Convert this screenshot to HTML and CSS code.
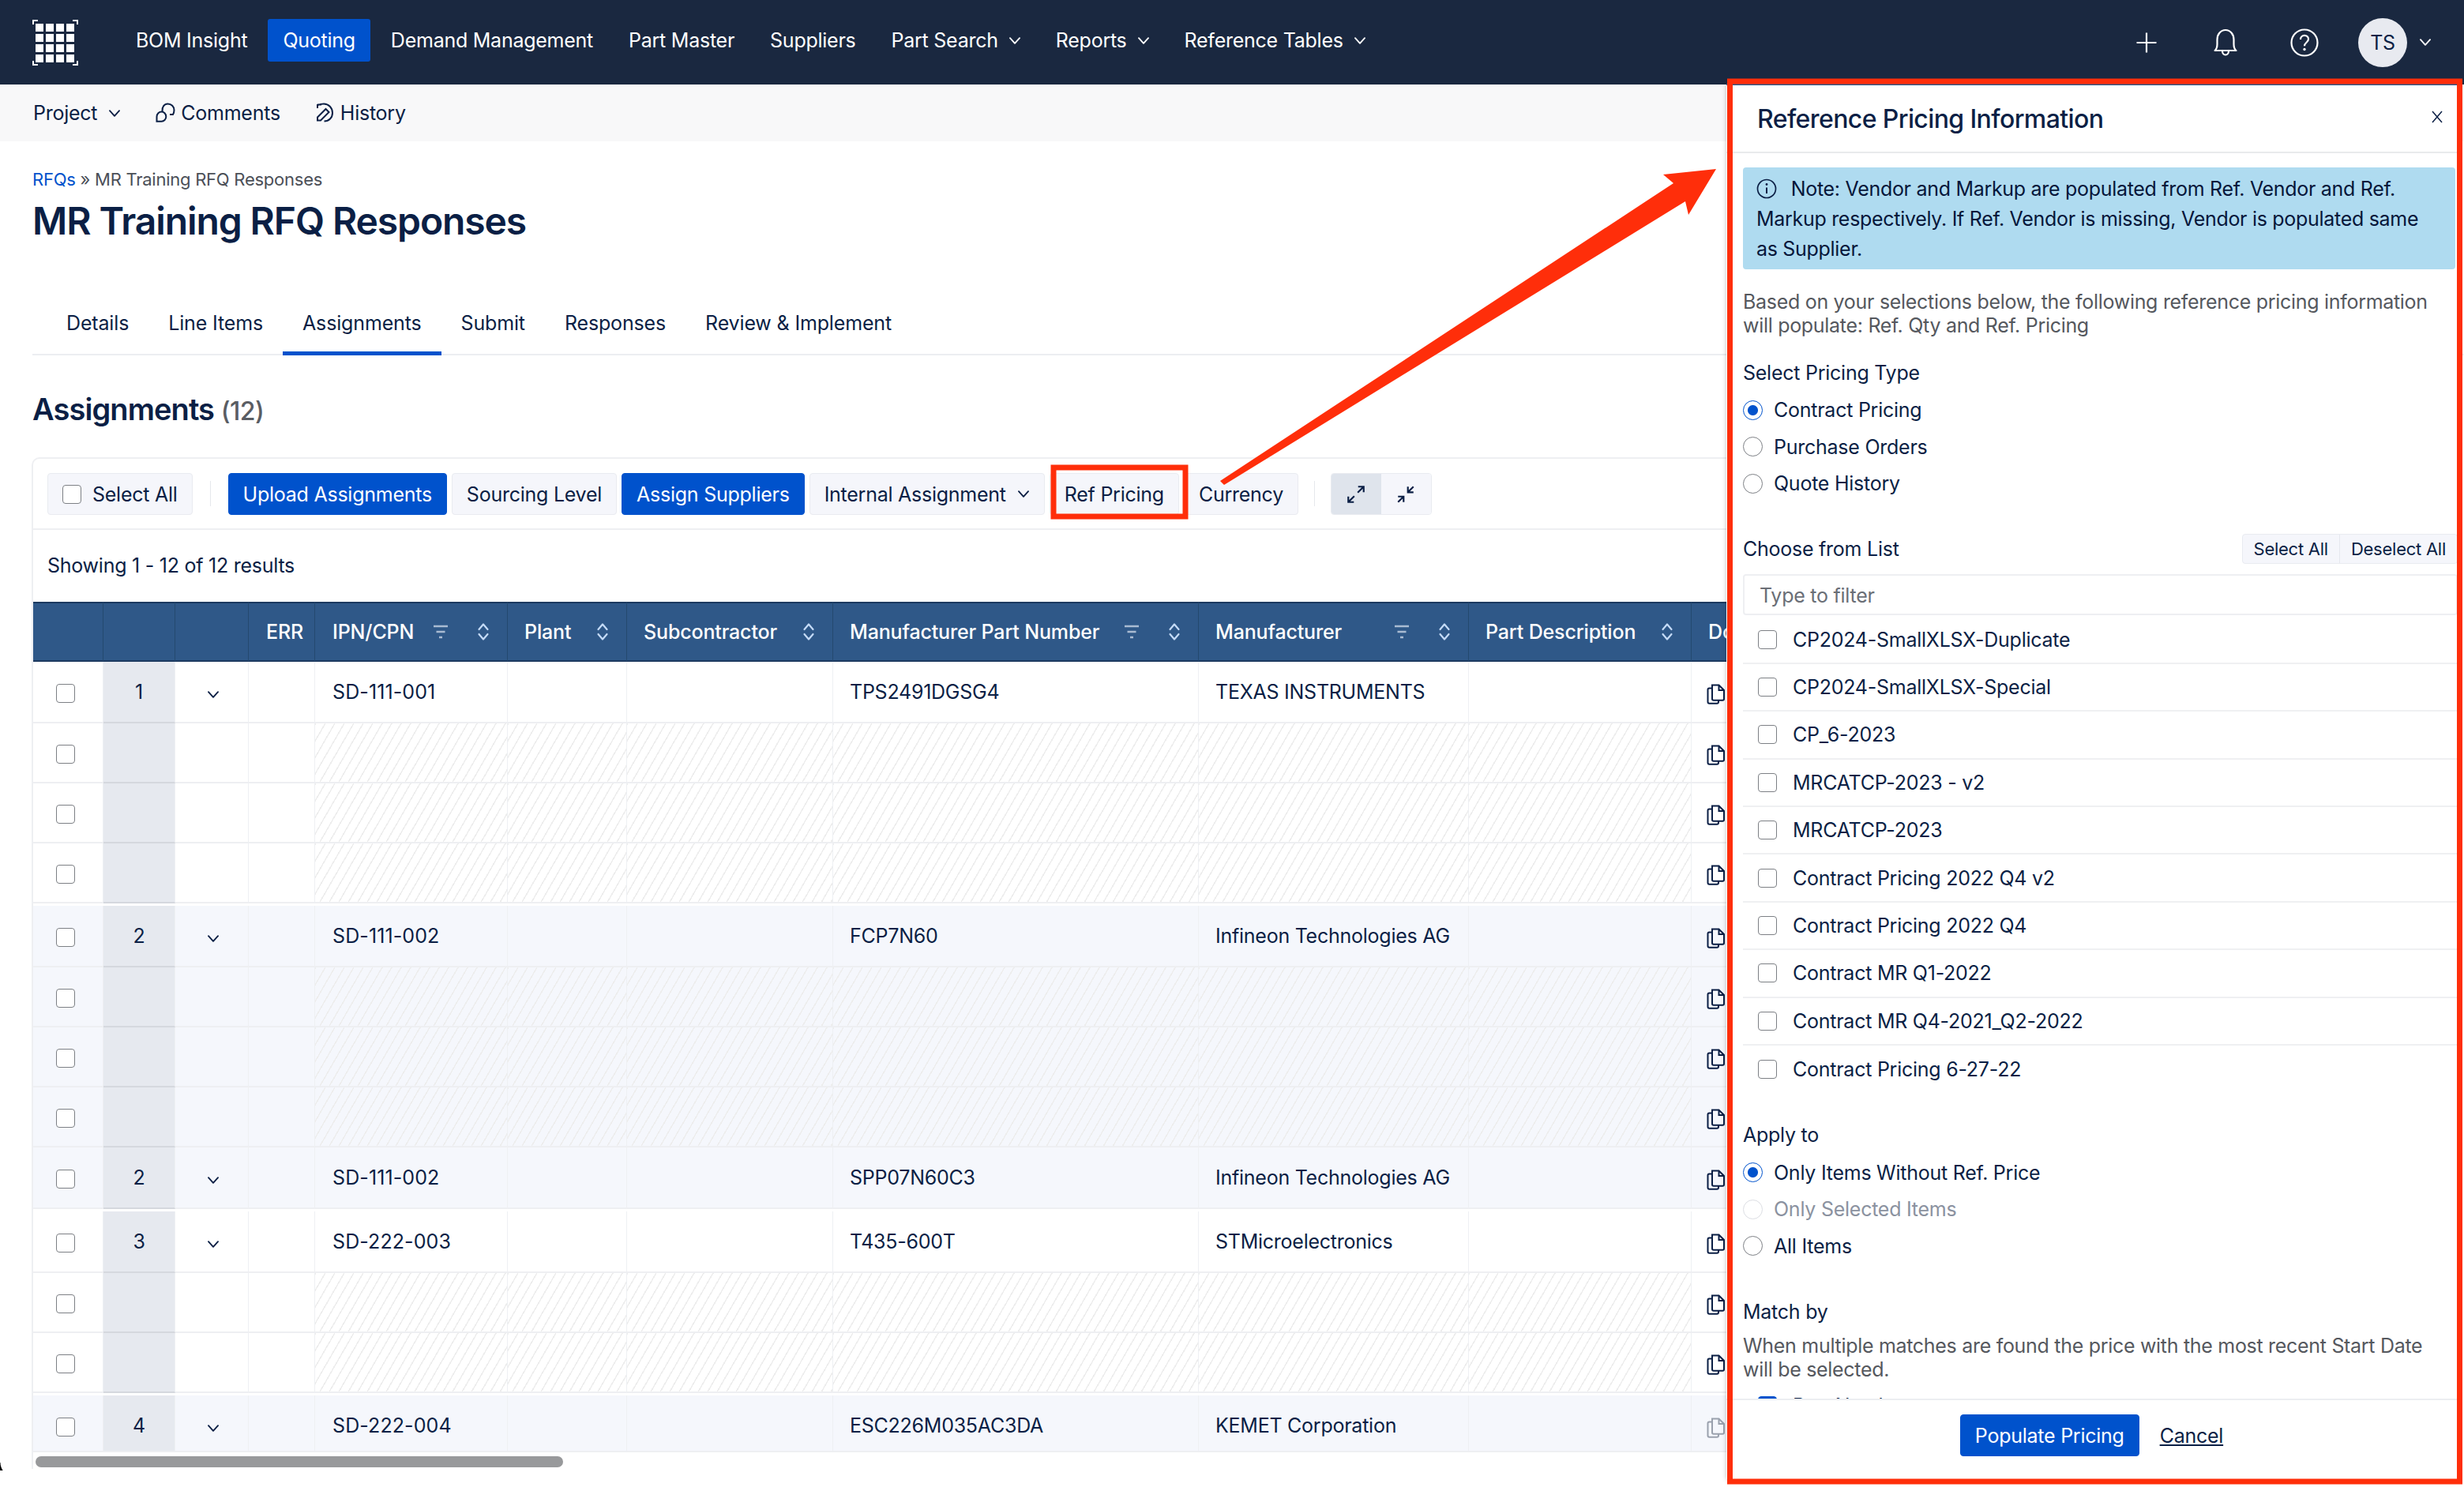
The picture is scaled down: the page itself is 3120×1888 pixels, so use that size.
FILE: index.html
```html
<!DOCTYPE html>
<html lang="en">
<head>
  <meta charset="UTF-8">
  <title>MR Training RFQ Responses</title>
  <link rel="stylesheet" href="styles.css">
</head>
<body>
  <svg class="defs" width="0" height="0">
    <symbol id="chev" viewBox="0 0 14 10"><path d="M1.500 2 7 8l5.500-6" fill="none" stroke="currentColor" stroke-width="1.700" stroke-linecap="round" stroke-linejoin="round"/></symbol>
    <symbol id="sort" viewBox="0 0 16 24"><path d="M2.500 9 8 2.500 13.500 9M2.500 15 8 21.500 13.500 15" fill="none" stroke="#c5dbf7" stroke-width="2.200" stroke-linecap="round" stroke-linejoin="round"/></symbol>
    <symbol id="filter" viewBox="0 0 20 20"><path d="M1 3h18M4.500 10h11M8 17h4" fill="none" stroke="#a9bbd2" stroke-width="2.400"/></symbol>
    <symbol id="copy" viewBox="0 0 24 26"><path d="M7 1.500h8.500L22 8v11a1.800 1.800 0 0 1-1.800 1.800H8.800A1.800 1.800 0 0 1 7 19zM15.500 1.500V8H22" fill="none" stroke="currentColor" stroke-width="2"/><path d="M7 5.500H3.200A1.800 1.800 0 0 0 1.500 7.300v15.400a2 2 0 0 0 2 2H13a2 2 0 0 0 2-2v-1.900" fill="none" stroke="currentColor" stroke-width="2"/></symbol>
  </svg>

  <header class="topnav">
    <svg class="logo" viewBox="0 0 58 58">
      <path d="M1 6V1h6M51 1h6v5M1 52v5h6M51 57h6v-5" fill="none" stroke="#fff" stroke-width="2"/>
      <g fill="#fff">
        <rect x="4" y="5" width="10" height="10"/><rect x="17" y="5" width="10" height="10"/><rect x="30" y="5" width="10" height="10"/><rect x="43" y="5" width="10" height="10"/>
        <rect x="4" y="18" width="10" height="10"/><rect x="17" y="18" width="10" height="10"/><rect x="30" y="18" width="10" height="10"/><rect x="43" y="18" width="10" height="10"/>
        <rect x="4" y="31" width="10" height="10"/><rect x="17" y="31" width="10" height="10"/><rect x="30" y="31" width="10" height="10"/><rect x="43" y="31" width="10" height="10"/>
        <rect x="4" y="44" width="10" height="10"/><rect x="17" y="44" width="10" height="10"/><rect x="30" y="44" width="10" height="10"/><rect x="43" y="44" width="10" height="10"/>
      </g>
    </svg>
    <nav class="nav-links">
      <a>BOM Insight</a>
      <a class="active">Quoting</a>
      <a>Demand Management</a>
      <a>Part Master</a>
      <a>Suppliers</a>
      <a>Part Search <svg class="chev"><use href="#chev"/></svg></a>
      <a>Reports <svg class="chev"><use href="#chev"/></svg></a>
      <a>Reference Tables <svg class="chev"><use href="#chev"/></svg></a>
    </nav>
    <div class="nav-right">
      <svg class="nav-icon" viewBox="0 0 36 36"><path d="M18 5.500v25M5.500 18h25" fill="none" stroke="#fff" stroke-width="2.200"/></svg>
      <svg class="nav-icon" viewBox="0 0 36 36"><path d="M4.500 28c2.500-2 3-4 3-8v-6C7.500 7.500 12 2 18 2s10.500 5.500 10.500 12v6c0 4 .5 6 3 8zM14 28.500c0 3 1.800 5 4 5s4-2 4-5" fill="none" stroke="#fff" stroke-width="2.200" stroke-linejoin="round"/></svg>
      <svg class="nav-icon" viewBox="0 0 36 36"><circle cx="18" cy="18" r="16.500" fill="none" stroke="#fff" stroke-width="2.200"/><path d="M13 14c0-3.200 2.300-5.200 5-5.200s5 2 5 4.800c0 4.200-5 4.200-5 8.700" fill="none" stroke="#fff" stroke-width="2.200"/><circle cx="18" cy="26.500" r="1.700" fill="#fff"/></svg>
      <span class="avatar">TS</span>
      <svg class="chev"><use href="#chev"/></svg>
    </div>
  </header>

  <div class="subbar">
    <a>Project <svg class="chev"><use href="#chev"/></svg></a>
    <a class="with-icon">
      <svg class="sub-icon" viewBox="0 0 26 26"><path d="M8.500 11C8 5.500 11 1.500 15.500 1.500c4.500 0 8 3.500 8 8 0 2-.5 3.800-1.500 5.500h-4" fill="none" stroke="currentColor" stroke-width="2"/><path d="M7.500 11.500c3 0 5.800 2.500 5.800 6.200 0 3.500-2.800 6-5.800 6H1.500v-6c0-3.700 3-6.200 6-6.200z" fill="none" stroke="currentColor" stroke-width="2"/></svg>
      Comments
    </a>
    <a class="with-icon">
      <svg class="sub-icon" viewBox="0 0 26 26"><path d="M3 7V2M3 2.500h5M3.500 3C6 2 8 1.500 11 1.500c6 0 11 5 11 11.500 0 6-4.500 10.500-10.500 10.500" fill="none" stroke="currentColor" stroke-width="2"/><path d="M3 18.500 13.500 8l4 4L7 22.500H3z" fill="none" stroke="currentColor" stroke-width="2"/></svg>
      History
    </a>
  </div>

  <main class="page">
    <div class="crumbs"><a>RFQs</a> » MR Training RFQ Responses</div>
    <h1>MR Training RFQ Responses</h1>

    <div class="tabs">
      <a>Details</a>
      <a>Line Items</a>
      <a class="active">Assignments</a>
      <a>Submit</a>
      <a>Responses</a>
      <a>Review &amp; Implement</a>
    </div>

    <h2>Assignments <span>(12)</span></h2>

    <section class="card">
      <div class="toolbar">
        <label class="btn"><input type="checkbox"> Select All</label>
        <span class="sep"></span>
        <button class="btn primary">Upload Assignments</button>
        <button class="btn">Sourcing Level</button>
        <button class="btn primary">Assign Suppliers</button>
        <button class="btn">Internal Assignment <svg class="chev"><use href="#chev"/></svg></button>
        <button class="btn">Ref Pricing</button>
        <button class="btn">Currency</button>
        <span class="sep wide"></span>
        <div class="btn-group">
          <button class="on">
            <svg class="size-icon" viewBox="0 0 24 24"><path d="M14.500 3H21v6.500M21 3l-7 7M9.500 21H3v-6.500M3 21l7-7" fill="none" stroke="currentColor" stroke-width="2"/></svg>
          </button>
          <button>
            <svg class="size-icon" viewBox="0 0 24 24"><path d="M21 9.500h-6.500V3M14.500 9.500 21 3M3 14.500h6.500V21M9.500 14.500 3 21" fill="none" stroke="currentColor" stroke-width="2"/></svg>
          </button>
        </div>
      </div>

      <div class="results">Showing 1 - 12 of 12 results</div>

      <div class="table-wrap">
        <table>
          <colgroup>
            <col class="c-check"><col class="c-num"><col class="c-exp"><col class="c-err"><col class="c-ipn"><col class="c-plant"><col class="c-sub"><col class="c-mpn"><col class="c-mfr"><col class="c-desc"><col class="c-doc">
          </colgroup>
          <thead>
            <tr>
              <th></th><th></th><th></th>
              <th>ERR</th>
              <th><div class="th"><span>IPN/CPN</span><svg class="filter"><use href="#filter"/></svg><svg class="sort"><use href="#sort"/></svg></div></th>
              <th><div class="th"><span>Plant</span><svg class="sort"><use href="#sort"/></svg></div></th>
              <th><div class="th"><span>Subcontractor</span><svg class="sort"><use href="#sort"/></svg></div></th>
              <th><div class="th"><span>Manufacturer Part Number</span><svg class="filter"><use href="#filter"/></svg><svg class="sort"><use href="#sort"/></svg></div></th>
              <th><div class="th"><span>Manufacturer</span><svg class="filter"><use href="#filter"/></svg><svg class="sort"><use href="#sort"/></svg></div></th>
              <th><div class="th"><span>Part Description</span><svg class="sort"><use href="#sort"/></svg></div></th>
              <th>Docs</th>
            </tr>
          </thead>
          <tbody>
            <!-- line 1 -->
            <tr class="main">
              <td><input type="checkbox"></td><td class="num">1</td><td class="exp"><svg class="chev"><use href="#chev"/></svg></td><td></td>
              <td>SD-111-001</td><td></td><td></td><td>TPS2491DGSG4</td><td>TEXAS INSTRUMENTS</td><td></td>
              <td><svg class="copy"><use href="#copy"/></svg></td>
            </tr>
            <tr class="sub">
              <td><input type="checkbox"></td><td class="num"></td><td></td><td></td>
              <td class="hatch"></td><td class="hatch"></td><td class="hatch"></td><td class="hatch"></td><td class="hatch"></td><td class="hatch"></td>
              <td><svg class="copy"><use href="#copy"/></svg></td>
            </tr>
            <tr class="sub">
              <td><input type="checkbox"></td><td class="num"></td><td></td><td></td>
              <td class="hatch"></td><td class="hatch"></td><td class="hatch"></td><td class="hatch"></td><td class="hatch"></td><td class="hatch"></td>
              <td><svg class="copy"><use href="#copy"/></svg></td>
            </tr>
            <tr class="sub">
              <td><input type="checkbox"></td><td class="num"></td><td></td><td></td>
              <td class="hatch"></td><td class="hatch"></td><td class="hatch"></td><td class="hatch"></td><td class="hatch"></td><td class="hatch"></td>
              <td><svg class="copy"><use href="#copy"/></svg></td>
            </tr>
            <tr class="gap"><td colspan="11"></td></tr>
            <!-- line 2 -->
            <tr class="main alt">
              <td><input type="checkbox"></td><td class="num">2</td><td class="exp"><svg class="chev"><use href="#chev"/></svg></td><td></td>
              <td>SD-111-002</td><td></td><td></td><td>FCP7N60</td><td>Infineon Technologies AG</td><td></td>
              <td><svg class="copy"><use href="#copy"/></svg></td>
            </tr>
            <tr class="sub alt">
              <td><input type="checkbox"></td><td class="num"></td><td></td><td></td>
              <td class="hatch"></td><td class="hatch"></td><td class="hatch"></td><td class="hatch"></td><td class="hatch"></td><td class="hatch"></td>
              <td><svg class="copy"><use href="#copy"/></svg></td>
            </tr>
            <tr class="sub alt">
              <td><input type="checkbox"></td><td class="num"></td><td></td><td></td>
              <td class="hatch"></td><td class="hatch"></td><td class="hatch"></td><td class="hatch"></td><td class="hatch"></td><td class="hatch"></td>
              <td><svg class="copy"><use href="#copy"/></svg></td>
            </tr>
            <tr class="sub alt">
              <td><input type="checkbox"></td><td class="num"></td><td></td><td></td>
              <td class="hatch"></td><td class="hatch"></td><td class="hatch"></td><td class="hatch"></td><td class="hatch"></td><td class="hatch"></td>
              <td><svg class="copy"><use href="#copy"/></svg></td>
            </tr>
            <tr class="main alt">
              <td><input type="checkbox"></td><td class="num">2</td><td class="exp"><svg class="chev"><use href="#chev"/></svg></td><td></td>
              <td>SD-111-002</td><td></td><td></td><td>SPP07N60C3</td><td>Infineon Technologies AG</td><td></td>
              <td><svg class="copy"><use href="#copy"/></svg></td>
            </tr>
            <tr class="gap"><td colspan="11"></td></tr>
            <!-- line 3 -->
            <tr class="main">
              <td><input type="checkbox"></td><td class="num">3</td><td class="exp"><svg class="chev"><use href="#chev"/></svg></td><td></td>
              <td>SD-222-003</td><td></td><td></td><td>T435-600T</td><td>STMicroelectronics</td><td></td>
              <td><svg class="copy"><use href="#copy"/></svg></td>
            </tr>
            <tr class="sub">
              <td><input type="checkbox"></td><td class="num"></td><td></td><td></td>
              <td class="hatch"></td><td class="hatch"></td><td class="hatch"></td><td class="hatch"></td><td class="hatch"></td><td class="hatch"></td>
              <td><svg class="copy"><use href="#copy"/></svg></td>
            </tr>
            <tr class="sub">
              <td><input type="checkbox"></td><td class="num"></td><td></td><td></td>
              <td class="hatch"></td><td class="hatch"></td><td class="hatch"></td><td class="hatch"></td><td class="hatch"></td><td class="hatch"></td>
              <td><svg class="copy"><use href="#copy"/></svg></td>
            </tr>
            <tr class="gap"><td colspan="11"></td></tr>
            <!-- line 4 -->
            <tr class="main alt">
              <td><input type="checkbox"></td><td class="num">4</td><td class="exp"><svg class="chev"><use href="#chev"/></svg></td><td></td>
              <td>SD-222-004</td><td></td><td></td><td>ESC226M035AC3DA</td><td>KEMET Corporation</td><td></td>
              <td><svg class="copy faded"><use href="#copy"/></svg></td>
            </tr>
          </tbody>
        </table>
      </div>
      <div class="scrollbar"><div class="thumb"></div></div>
    </section>
  </main>

  <!-- drawer opens over the page -->
  <aside class="drawer">
    <div class="drawer-head">
      <h3>Reference Pricing Information</h3>
      <svg class="close" viewBox="0 0 16 16"><path d="M2 1l12 14M14 1 2 15" fill="none" stroke="#0b1f45" stroke-width="1.500"/></svg>
    </div>
    <div class="drawer-body">
      <div class="alert">
        <svg class="info" viewBox="0 0 26 26"><circle cx="13" cy="13" r="11.500" fill="none" stroke="#0b1f45" stroke-width="1.700"/><path d="M13 11.500V19" stroke="#0b1f45" stroke-width="2"/><circle cx="13" cy="7.500" r="1.400" fill="#0b1f45"/></svg>
        Note: Vendor and Markup are populated from Ref. Vendor and Ref. Markup respectively. If Ref. Vendor is missing, Vendor is populated same as Supplier.
      </div>
      <p class="help first">Based on your selections below, the following reference pricing information will populate: Ref. Qty and Ref. Pricing</p>

      <div class="label type-label">Select Pricing Type</div>
      <div class="radios">
        <label><input type="radio" name="ptype" checked> Contract Pricing</label>
        <label><input type="radio" name="ptype"> Purchase Orders</label>
        <label><input type="radio" name="ptype"> Quote History</label>
      </div>

      <div class="list-head">
        <div class="label">Choose from List</div>
        <div class="mini-group"><button>Select All</button><button>Deselect All</button></div>
      </div>
      <div class="filter-box">Type to filter</div>
      <ul class="pick-list">
        <li><input type="checkbox"> CP2024-SmallXLSX-Duplicate</li>
        <li><input type="checkbox"> CP2024-SmallXLSX-Special</li>
        <li><input type="checkbox"> CP_6-2023</li>
        <li><input type="checkbox"> MRCATCP-2023 - v2</li>
        <li><input type="checkbox"> MRCATCP-2023</li>
        <li><input type="checkbox"> Contract Pricing 2022 Q4 v2</li>
        <li><input type="checkbox"> Contract Pricing 2022 Q4</li>
        <li><input type="checkbox"> Contract MR Q1-2022</li>
        <li><input type="checkbox"> Contract MR Q4-2021_Q2-2022</li>
        <li><input type="checkbox"> Contract Pricing 6-27-22</li>
      </ul>

      <div class="label apply-label">Apply to</div>
      <div class="radios">
        <label><input type="radio" name="apply" checked> Only Items Without Ref. Price</label>
        <label class="disabled"><input type="radio" name="apply" disabled> Only Selected Items</label>
        <label><input type="radio" name="apply"> All Items</label>
      </div>

      <div class="label match-label">Match by</div>
      <p class="help match-help">When multiple matches are found the price with the most recent Start Date will be selected.</p>
      <label class="match-check"><input type="checkbox" checked> Part Number</label>
    </div>
    <div class="drawer-foot">
      <button class="btn primary">Populate Pricing</button>
      <a class="cancel">Cancel</a>
    </div>
  </aside>

  <!-- red markup drawn on top of the screenshot -->
  <svg class="markup" viewBox="0 0 3120 1888">
    <rect class="outline" x="2190.500" y="103" width="924" height="1773"/>
    <rect class="outline" x="1334" y="592" width="167" height="62"/>
    <polygon class="arrow" points="1545,609 2119,232 2106,221 2173,214 2138,272 2134,255 1550,614"/>
  </svg>
  <div class="corner"></div>
</body>
</html>
```

FILE: styles.css
```css
* { box-sizing: border-box; }

body {
  margin: 0;
  width: 3120px;
  height: 1888px;
  overflow: hidden;
  position: relative;
  background: #fff;
  color: #0b1f45;
  font-family: Inter, "Liberation Sans", sans-serif;
  font-size: 25px;
  letter-spacing: -0.25px;
}
.defs { position: absolute; }
button { font: inherit; color: inherit; letter-spacing: inherit; }

input[type="checkbox"], input[type="radio"] {
  appearance: none;
  margin: 0;
  width: 24px;
  height: 24px;
  flex: none;
  background: #fff;
  border: 1.5px solid #7d8085;
  vertical-align: middle;
}
input[type="checkbox"] { border-radius: 4px; }
input[type="radio"] { border-radius: 50%; width: 25px; height: 25px; }
input[type="radio"]:checked {
  border-color: #0052cc;
  background: radial-gradient(circle, #0052cc 0 6px, #fff 7px);
}
input[type="radio"]:disabled { border-color: #dcdee3; }
input[type="checkbox"]:checked { background: #0052cc; border-color: #0052cc; }

.chev { width: 16px; height: 11px; flex: none; }

/* top nav */
.topnav {
  height: 107px;
  display: flex;
  align-items: center;
  padding: 0 41px;
  background: #1a2840;
  color: #fff;
}
.logo { width: 58px; height: 58px; flex: none; }
.nav-links {
  display: flex;
  align-items: center;
  gap: 7px;
  margin: 0 0 5px 54px;
}
.nav-links a {
  display: flex;
  align-items: center;
  gap: 13px;
  height: 54px;
  padding: 0 19px;
  border-radius: 3px;
}
.nav-links a:nth-child(n+6) { margin-right: -1px; }
.nav-links a.active { background: #0052cc; }
.nav-right {
  margin-left: auto;
  display: flex;
  align-items: center;
}
.nav-icon { width: 36px; height: 36px; margin-right: 64px; }
.nav-icon:nth-child(3) { margin-right: 50px; }
.avatar {
  width: 62px;
  height: 62px;
  border-radius: 50%;
  background: #e8eaf0;
  color: #0b1f45;
  display: flex;
  align-items: center;
  justify-content: center;
  margin-right: 15px;
}

/* sub bar */
.subbar {
  height: 72px;
  display: flex;
  align-items: center;
  gap: 44px;
  padding-left: 42px;
  background: #f8f8f9;
}
.subbar a { display: flex; align-items: center; gap: 14px; }
.subbar a.with-icon { gap: 6px; }
.sub-icon { width: 26px; height: 26px; }

/* page */
.page { padding-left: 41px; }
.crumbs {
  margin-top: 34px;
  line-height: 28px;
  font-size: 22px;
  color: #4b4f57;
}
.crumbs a { color: #0052cc; }
h1 {
  margin: 7px 0 0;
  font-size: 48px;
  line-height: 64px;
  font-weight: 600;
  letter-spacing: -1.100px;
  color: #0b1f45;
}
.tabs {
  margin-top: 57px;
  height: 81px;
  padding-left: 18px;
  display: flex;
  border-bottom: 2px solid #eceef1;
  letter-spacing: -0.15px;
}
.tabs a {
  padding: 0 25px;
  line-height: 80px;
  height: 81px;
}
.tabs a.active { border-bottom: 5px solid #0052cc; }
h2 {
  margin: 44px 0 34px;
  font-size: 38px;
  line-height: 48px;
  font-weight: 600;
  letter-spacing: -0.900px;
}
h2 span { font-size: 32px; font-weight: 500; letter-spacing: -0.5px; color: #5a5d63; }

/* card and toolbar */
.card {
  width: 2300px;
  height: 1281px;
  margin-left: -1px;
  border: 2px solid #eeeff2;
  border-right: 0;
  border-bottom: 0;
  border-radius: 10px 0 0 0;
}
.toolbar {
  height: 90px;
  padding: 18px 0 0 18px;
  display: flex;
  gap: 6px;
  border-bottom: 2px solid #eeeff2;
  margin-bottom: 0;
}
.btn {
  height: 53px;
  padding: 0 18px;
  display: flex;
  align-items: center;
  gap: 14px;
  background: #f5f6fb;
  border: 1px solid #e9ebf0;
  border-radius: 4px;
  white-space: nowrap;
}
.btn.primary { background: #0052cc; border-color: #0052cc; color: #fff; }
.sep {
  width: 1px;
  height: 32px;
  margin: 10px 16px;
  background: #e6e8ec;
}
.sep.wide { margin: 10px 14px; }
.btn-group {
  display: flex;
  height: 53px;
  border: 1px solid #e9ebf0;
  border-radius: 4px;
  overflow: hidden;
}
.btn-group button {
  width: 63px;
  border: 0;
  padding: 0;
  background: #f5f6fb;
  display: flex;
  align-items: center;
  justify-content: center;
}
.btn-group button.on { background: #dfe4ec; }
.size-icon { width: 26px; height: 26px; }
.results {
  height: 91px;
  padding: 0 0 0 18px;
  line-height: 90px;
}

/* table */
.table-wrap { height: 1075px; overflow: hidden; }
table {
  width: 2460px;
  table-layout: fixed;
  border-collapse: separate;
  border-spacing: 0;
}
.c-check { width: 89px; }
.c-num { width: 91px; }
.c-exp { width: 93px; }
.c-err { width: 84px; }
.c-ipn { width: 244px; }
.c-plant { width: 151px; }
.c-sub { width: 261px; }
.c-mpn { width: 463px; }
.c-mfr { width: 342px; }
.c-desc { width: 282px; }
th {
  height: 76px;
  padding: 0 0 0 21px;
  text-align: left;
  font-weight: 500;
  letter-spacing: -0.15px;
  background: #2f5888;
  color: #fff;
  border-top: 2px solid #1c3a60;
  border-bottom: 2px solid #1c3a60;
  border-right: 1px solid #24496f;
  white-space: nowrap;
}
th:nth-child(4), th:nth-child(5) { padding-left: 22px; }
.th {
  display: flex;
  align-items: center;
  padding-right: 22px;
}
.th span { flex: 1; }
.filter { width: 20px; height: 20px; margin-right: 36px; }
.sort { width: 16px; height: 24px; }
td {
  padding: 0 0 0 21px;
  border-right: 1px solid #eef0f3;
  border-bottom: 2px solid #eeeff2;
  white-space: nowrap;
}
td:first-child { padding-left: 29px; }
td:nth-child(5) { padding-left: 22px; letter-spacing: 0.1px; }
tr.main td { height: 78px; }
tr.sub td { height: 76px; }
tr.alt td { background-color: #f5f7fc; }
tr.gap td { height: 3px; padding: 0; border: 0; background: #fff; }
td.num {
  padding: 0;
  text-align: center;
  border-bottom-color: #d5d8de;
}
tr td.num { background-color: #e6e9ef; }
td.exp { padding: 0 0 0 40px; }
td.hatch {
  background-image: repeating-linear-gradient(120deg, #ededed 0 1.5px, transparent 1.5px 10.400px);
}
.copy { width: 24px; height: 26px; margin-top: 4px; color: #0b1f45; vertical-align: middle; }
.copy.faded { color: #9aa1ad; }
td:last-child { padding-left: 19px; }
.scrollbar { height: 22px; padding: 5px 0 0 3px; border-top: 2px solid #eeeff2; }
.thumb { width: 668px; height: 14px; border-radius: 7px; background: #98999b; }

/* drawer */
.drawer {
  position: absolute;
  left: 2186px;
  top: 106px;
  width: 925px;
  height: 1767px;
  background: #fff;
  border-top: 2px solid #2f5888;
  box-shadow: 0 0 6px rgba(0, 0, 0, 0.25);
  display: flex;
  flex-direction: column;
}
.drawer-head {
  height: 86px;
  flex: none;
  display: flex;
  align-items: center;
  justify-content: space-between;
  padding: 0 17px 0 39px;
  border-bottom: 2px solid #e9eaec;
}
.drawer-head h3 { margin: 0; font-size: 32px; font-weight: 500; letter-spacing: -0.600px; }
.close { width: 16px; height: 16px; margin-top: -4px; }
.drawer-body {
  flex: 1;
  overflow: hidden;
  padding: 18px 0 0 21px;
}
.alert {
  width: 902px;
  height: 129px;
  padding: 8px 14px 0 17px;
  line-height: 38px;
  background: #afdbf0;
  border-radius: 4px;
  color: #06163a;
  letter-spacing: -0.3px;
}
.info { width: 26px; height: 26px; margin-right: 11px; vertical-align: -4px; }
.help {
  margin: 0;
  line-height: 30px;
  color: #55585e;
  letter-spacing: -0.3px;
}
.help.first { margin-top: 26px; width: 890px; }
.label { line-height: 30px; }
.type-label { margin-top: 30px; }
.radios { margin-top: 9px; }
.radios label {
  display: flex;
  align-items: center;
  gap: 14px;
  height: 46.500px;
}
.radios label.disabled { color: #8b92a0; }
.list-head {
  margin-top: 40px;
  width: 905px;
  display: flex;
  align-items: center;
  justify-content: space-between;
}
.mini-group {
  height: 38px;
  display: flex;
  background: #f5f6fb;
  border: 1px solid #e9ebf0;
  border-radius: 4px;
  font-size: 22px;
}
.mini-group button {
  border: 0;
  background: none;
  padding: 0 14px;
}
.mini-group button + button { border-left: 1px solid #e6e8ee; }
.filter-box {
  margin-top: 13px;
  width: 905px;
  height: 52px;
  padding-left: 19px;
  line-height: 50px;
  color: #6a6e76;
  border: 2px solid #eeeff2;
  border-radius: 4px;
}
.pick-list {
  list-style: none;
  margin: 2px 0 0;
  padding: 0;
  width: 905px;
}
.pick-list li {
  height: 60.400px;
  display: flex;
  align-items: center;
  gap: 20px;
  padding-left: 19px;
  border-bottom: 2px solid #eff0f2;
}
.pick-list li:last-child { border-bottom: 0; }
.apply-label { margin-top: 38px; }
.match-label { margin-top: 45px; }
.help.match-help { margin-top: 13px; width: 890px; }
.match-check {
  display: flex;
  align-items: center;
  gap: 20px;
  margin: 16px 0 0 19px;
}
.drawer-foot {
  height: 102px;
  flex: none;
  display: flex;
  justify-content: center;
  align-items: flex-start;
  gap: 26px;
  padding-top: 18px;
  border-top: 2px solid #eceef1;
}
.cancel {
  text-decoration: underline;
  line-height: 54px;
}

/* annotation layer */
.markup {
  position: absolute;
  left: 0;
  top: 0;
  width: 3120px;
  height: 1888px;
  pointer-events: none;
}
.outline { fill: none; stroke: #ff2e0a; stroke-width: 7; }
.arrow { fill: #ff2e0a; }
.corner {
  position: absolute;
  left: 0;
  top: 1852px;
  width: 18px;
  height: 10px;
  background: radial-gradient(circle at 100% 0, transparent 17px, #000 18px);
}
```
